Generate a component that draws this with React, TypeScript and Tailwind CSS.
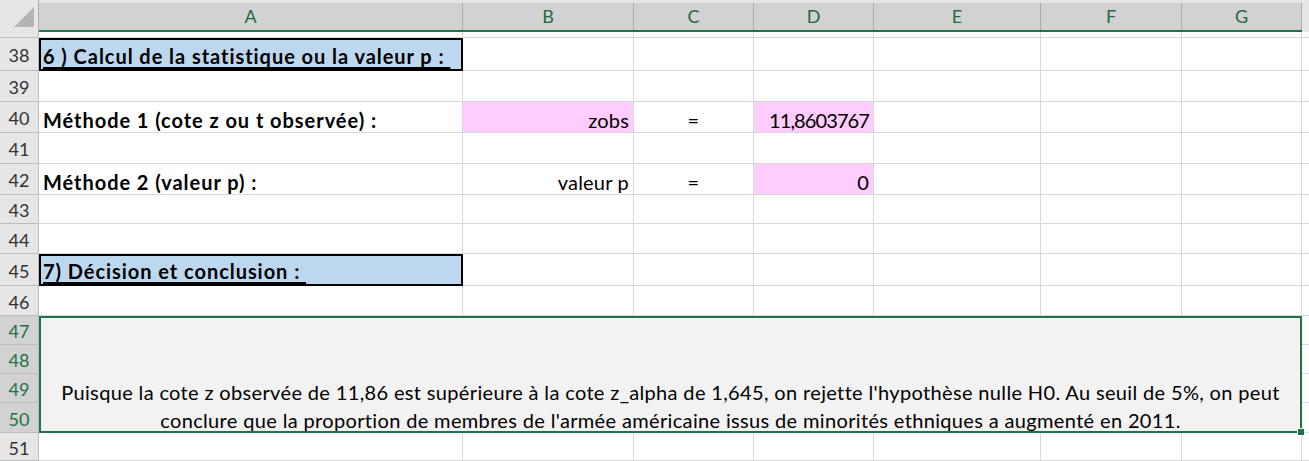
import React from 'react';

const COLS = 'grid grid-cols-[39px_424px_171px_120px_120px_167px_141px_120px_7px]';
const LETTERS = ['A', 'B', 'C', 'D', 'E', 'F', 'G'];

type Cell = {
  text?: string;
  align?: 'left' | 'right' | 'center';
  pink?: boolean;
  bold?: boolean;
  num?: boolean;
};

type Row = {
  n: number;
  h: string;
  cells?: Record<number, Cell>;
  box?: string;
  selected?: boolean;
  merged?: boolean;
};

const rows: Row[] = [
  { n: 37, h: 'h-[6px]' },
  { n: 38, h: 'h-[33px]', box: '6 ) Calcul de la statistique ou la valeur p : ' },
  { n: 39, h: 'h-[31px]' },
  {
    n: 40,
    h: 'h-[31px]',
    cells: {
      0: { text: 'Méthode 1 (cote z ou t observée) :', bold: true },
      1: { text: 'zobs', align: 'right', pink: true },
      2: { text: '=', align: 'center' },
      3: { text: '11,8603767', align: 'right', pink: true, num: true },
    },
  },
  { n: 41, h: 'h-[31px]' },
  {
    n: 42,
    h: 'h-[31px]',
    cells: {
      0: { text: 'Méthode 2 (valeur p) :', bold: true },
      1: { text: 'valeur p', align: 'right' },
      2: { text: '=', align: 'center' },
      3: { text: '0', align: 'right', pink: true },
    },
  },
  { n: 43, h: 'h-[29px]' },
  { n: 44, h: 'h-[30px]' },
  { n: 45, h: 'h-[32px]', box: '7) Décision et conclusion : ' },
  { n: 46, h: 'h-[30px]' },
  { n: 47, h: 'h-[29px]', selected: true, merged: true },
  { n: 48, h: 'h-[29px]', selected: true, merged: true },
  { n: 49, h: 'h-[29px]', selected: true, merged: true },
  { n: 50, h: 'h-[30px]', selected: true, merged: true },
  { n: 51, h: 'h-[28px]' },
];

const alignClass = {
  left: 'justify-start pl-[4px]',
  right: 'justify-end pr-[4px]',
  center: 'justify-center',
};

function RowHeader({ row }: { row: Row }) {
  if (row.n === 37) {
    return (
      <div className={`${row.h} overflow-hidden bg-[#e6e6e6] border-r border-b border-[#bdbdbd] flex justify-center`}>
        <span className="-mt-[19px] leading-[22px] text-[18px] text-[#333]">37</span>
      </div>
    );
  }
  return (
    <div
      className={`${row.h} flex items-center justify-center pt-[2px] border-r border-b border-[#bdbdbd] text-[18px] leading-none ${
        row.selected ? 'bg-[#d2d2d2] text-[#217346]' : 'bg-[#e6e6e6] text-[#333]'
      }`}
    >
      {row.n}
    </div>
  );
}

function BodyCell({ row, col }: { row: Row; col: number }) {
  const cell = row.cells?.[col];
  if (col === 0 && row.box) {
    return (
      <div className={`${row.h} bg-[#bdd7ee] border-2 border-black flex items-end pl-[2px] pb-[1px]`}>
        <span className="whitespace-pre font-bold tracking-[0.95px] underline underline-offset-[3px] decoration-[1.5px] leading-[24px]">
          {row.box}
        </span>
      </div>
    );
  }
  const track = cell?.bold ? 'font-bold tracking-[0.95px]' : cell?.num ? 'tracking-[-0.9px]' : 'tracking-[0.2px]';
  return (
    <div
      className={`${row.h} border-r border-b border-[#d9d9d9] flex items-end overflow-visible ${
        cell?.pink ? 'bg-[#ffccff]' : ''
      } ${alignClass[cell?.align ?? 'left']}`}
    >
      {cell?.text && <span className={`whitespace-nowrap leading-[24px] ${track}`}>{cell.text}</span>}
    </div>
  );
}

export default function App() {
  return (
    <div className="w-[1309px] h-[461px] overflow-hidden bg-white font-['Lato',sans-serif] text-[20px] text-black">
      {/* column headers */}
      <div className={`${COLS} h-[32px]`}>
        <div className="bg-[#e6e6e6] border-r border-[#ababab] flex items-start justify-end pt-[7px] pr-[4px]">
          <svg width="20" height="20" viewBox="0 0 20 20">
            <polygon points="20,0 20,20 0,20" fill="#b4b4b4" />
          </svg>
        </div>
        {LETTERS.map((l) => (
          <div key={l} className="flex flex-col">
            <div className="h-[3px] bg-[#e6e6e6]" />
            <div className="flex-1 bg-[#d2d2d2] border-r border-[#ababab] flex items-center justify-center text-[18px] text-[#1e6b43]">
              {l}
            </div>
            <div className="h-[2px] bg-[#217346]" />
          </div>
        ))}
        <div className="bg-[#e6e6e6]" />
      </div>

      {/* sheet body */}
      <div className={`${COLS} relative`}>
        {rows.map((row) => (
          <React.Fragment key={row.n}>
            <RowHeader row={row} />
            {row.merged ? null : [0, 1, 2, 3, 4, 5, 6].map((c) => <BodyCell key={c} row={row} col={c} />)}
            <div className={`${row.h} border-b border-[#d9d9d9]`} />
          </React.Fragment>
        ))}
        <div className="col-start-2 col-span-7 row-start-11 row-span-4 relative bg-[#f2f2f2] border-2 border-[#217346] flex flex-col justify-end items-center text-center leading-[28px] tracking-[0.35px]">
          <div className="-mb-[3px]">
            <div>
              Puisque la cote z observée de 11,86 est supérieure à la cote z_alpha de 1,645, on rejette l'hypothèse nulle H0. Au seuil de 5%, on peut
            </div>
            <div>conclure que la proportion de membres de l'armée américaine issus de minorités ethniques a augmenté en 2011.</div>
          </div>
          <div className="absolute -right-[5px] -bottom-[5px] w-[8px] h-[8px] bg-[#217346] border border-white" />
        </div>
      </div>
    </div>
  );
}
